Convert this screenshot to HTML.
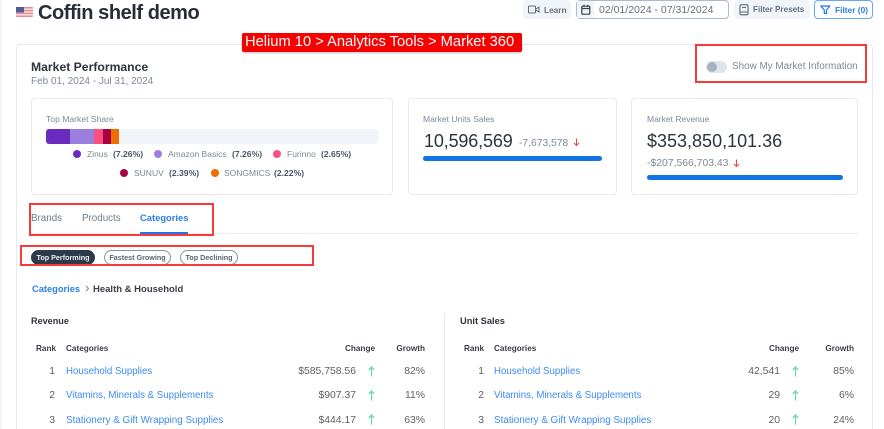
<!DOCTYPE html>
<html><head><meta charset="utf-8">
<style>
html,body{margin:0;padding:0;background:#fff;}
#p{position:relative;width:884px;height:429px;overflow:hidden;background:#fff;font-family:"Liberation Sans",sans-serif;color:#5f6b78;filter:blur(.35px);}
.t{position:absolute;white-space:nowrap;line-height:20px;height:20px;font-size:10.5px;}
.b{position:absolute;box-sizing:border-box;}
.card{position:absolute;box-sizing:border-box;border:1px solid #e6ebf1;border-radius:4px;background:#fff;}
.l{color:#3d8bf2;font-size:9.7px;}
.v{color:#5f5f5f;font-size:10.4px;}
.h{color:#3a3f46;font-size:8.2px;font-weight:bold;}
.g{color:#7d8996;}
.s{font-size:8.5px;}
.d{position:absolute;width:8px;height:8px;border-radius:50%;}
.pct{color:#4a5868;font-weight:bold;font-size:8.6px;}
.rb{position:absolute;box-sizing:border-box;border:2px solid #f73b3b;}
svg{position:absolute;overflow:visible;}
.pill{position:absolute;box-sizing:border-box;height:15px;top:250px;border-radius:8px;border:1px solid #8b949e;font-size:7.2px;font-weight:bold;line-height:13px;text-align:center;color:#5a6470;white-space:nowrap;}
</style></head><body><div id="p">
<div class="b" style="left:0;top:0;width:2px;height:429px;background:#f1f3f6"></div>

<svg style="left:16px;top:7px" width="17" height="10" viewBox="0 0 17 10"><rect width="17" height="10" rx="1" fill="#e58a92"/><rect y="1.5" width="17" height="1.4" fill="#f5e6e8"/><rect y="4.3" width="17" height="1.4" fill="#f5e6e8"/><rect y="7.1" width="17" height="1.4" fill="#f5e6e8"/><rect width="8" height="5.5" fill="#4d5f96"/></svg>
<div class="t" style="left:38px;top:3px;font-size:20px;font-weight:bold;color:#262d36;letter-spacing:-.45px">Coffin shelf demo</div>

<div class="b" style="left:523px;top:0;width:48px;height:19px;background:#f1f4f8;border-radius:4px"></div>
<svg style="left:528px;top:5px" width="12" height="10" fill="none" stroke="#5f6b78" stroke-width="1"><rect x=".5" y="1" width="7" height="7" rx="1"/><path d="M8 4l3-2v5l-3-2"/></svg>
<div class="t" style="left:544px;top:0;font-size:8.3px;font-weight:bold;color:#66727f">Learn</div>

<div class="b" style="left:576px;top:0;width:153px;height:19px;border:1px solid #a9bbd0;border-radius:4px"></div>
<div class="b" style="left:577px;top:1px;width:17px;height:17px;background:#f1f4f8"></div>
<svg style="left:581px;top:4px" width="10" height="12" fill="none" stroke="#39424e" stroke-width="1.2"><rect x=".8" y="2.2" width="8" height="8" rx="1"/><path d="M.8 4.5h8M3 .8v2M6.8 .8v2"/></svg>
<div class="t" style="left:599px;top:0;font-size:10.5px;color:#67727e">02/01/2024 - 07/31/2024</div>

<div class="b" style="left:734px;top:0;width:76px;height:19px;background:#f1f4f8;border-radius:4px"></div>
<svg style="left:739px;top:4px" width="10" height="12" fill="none" stroke="#5f6b78" stroke-width="1.1"><rect x="1" y=".8" width="8" height="10" rx="1"/><path d="M1 8h8M3 3.5h4"/></svg>
<div class="t" style="left:753px;top:0;font-size:8.1px;font-weight:bold;color:#66727f">Filter Presets</div>

<div class="b" style="left:814px;top:0;width:59px;height:19px;border:1px solid #6ba6f2;border-radius:4px"></div>
<svg style="left:820px;top:5px" width="11" height="10" fill="none" stroke="#1f76e8" stroke-width="1.2"><path d="M.8 1h9L6.5 5v3.5L4.3 8.5V5z" stroke-linejoin="round"/></svg>
<div class="t" style="left:835px;top:0;font-size:8.4px;font-weight:bold;color:#2b7fea">Filter (0)</div>

<div class="card" style="left:16px;top:44px;width:857px;height:400px"></div>

<div class="t" style="left:31px;top:57px;font-size:12.2px;font-weight:bold;color:#2b3440">Market Performance</div>
<div class="t g" style="left:31px;top:72px;font-size:10px">Feb 01, 2024 - Jul 31, 2024</div>

<div class="b" style="left:706px;top:61px;width:21px;height:12px;border-radius:6px;background:#dfe5ec"></div>
<div class="b" style="left:707px;top:62px;width:10px;height:10px;border-radius:50%;background:#a7b3c3"></div>
<div class="t g" style="left:732px;top:57px;font-size:9.900px">Show My Market Information</div>
<div class="rb" style="left:695px;top:44px;width:172px;height:39px"></div>

<div class="card" style="left:31px;top:98px;width:362px;height:97px"></div>
<div class="t g" style="left:46px;top:109px;font-size:8.6px">Top Market Share</div>
<div class="b" style="left:46px;top:129px;width:332px;height:15px;background:#f1f4f8;border-radius:3px"></div>
<div class="b" style="left:46px;top:129px;width:24px;height:15px;background:#6a2bbf;border-radius:3px 0 0 3px"></div>
<div class="b" style="left:70px;top:129px;width:24px;height:15px;background:#9b7fdc"></div>
<div class="b" style="left:94px;top:129px;width:9px;height:15px;background:#fb4f7f"></div>
<div class="b" style="left:103px;top:129px;width:8px;height:15px;background:#a80040"></div>
<div class="b" style="left:111px;top:129px;width:8px;height:15px;background:#ef6c00"></div>

<div class="d" style="left:73px;top:150px;background:#6a2bbf"></div>
<div class="t g s" style="left:87px;top:144px">Zinus</div>
<div class="t pct" style="left:113px;top:144px">(7.26%)</div>
<div class="d" style="left:154px;top:150px;background:#9b7fdc"></div>
<div class="t g s" style="left:168px;top:144px">Amazon Basics</div>
<div class="t pct" style="left:232px;top:144px">(7.26%)</div>
<div class="d" style="left:273px;top:150px;background:#fb4f7f"></div>
<div class="t g s" style="left:287px;top:144px">Furinno</div>
<div class="t pct" style="left:321px;top:144px">(2.65%)</div>
<div class="d" style="left:120px;top:169px;background:#a80040"></div>
<div class="t g s" style="left:134px;top:163px">SUNUV</div>
<div class="t pct" style="left:169px;top:163px">(2.39%)</div>
<div class="d" style="left:211px;top:169px;background:#ef6c00"></div>
<div class="t g s" style="left:224px;top:163px">SONGMICS</div>
<div class="t pct" style="left:274px;top:163px">(2.22%)</div>

<div class="card" style="left:408px;top:98px;width:209px;height:97px"></div>
<div class="t g s" style="left:423px;top:109px">Market Units Sales</div>
<div class="t" style="left:424px;top:131px;font-size:18px;color:#2c343d;letter-spacing:-.15px">10,596,569</div>
<div class="t g" style="left:519px;top:134px;font-size:10.3px">-7,673,578</div>
<svg style="left:573px;top:138px" width="7" height="9" fill="none" stroke="#e5484d" stroke-width="1"><path d="M3.500 .5v7M1 5l2.500 2.500L6 5"/></svg>
<div class="b" style="left:423px;top:156px;width:179px;height:5px;border-radius:3px;background:#1273e6"></div>

<div class="card" style="left:631px;top:98px;width:227px;height:97px"></div>
<div class="t g s" style="left:647px;top:109px">Market Revenue</div>
<div class="t" style="left:647px;top:131px;font-size:18px;color:#2c343d">$353,850,101.36</div>
<div class="t g" style="left:647px;top:154px;font-size:10.4px">-$207,566,703.43</div>
<svg style="left:733px;top:159px" width="7" height="9" fill="none" stroke="#e5484d" stroke-width="1"><path d="M3.500 .5v7M1 5l2.500 2.500L6 5"/></svg>
<div class="b" style="left:647px;top:175px;width:196px;height:5px;border-radius:3px;background:#1273e6"></div>

<div class="b" style="left:31px;top:233px;width:827px;height:1px;background:#e9edf2"></div>
<div class="t" style="left:31px;top:209px;font-size:9.8px;color:#6f7a86">Brands</div>
<div class="t" style="left:82px;top:209px;font-size:9.8px;color:#6f7a86">Products</div>
<div class="t" style="left:140px;top:208px;font-size:9.4px;font-weight:bold;color:#2b7fea">Categories</div>
<div class="b" style="left:140px;top:232px;width:48px;height:2px;background:#1f76e8"></div>
<div class="rb" style="left:29px;top:203px;width:185px;height:33px"></div>

<div class="pill" style="left:31px;width:64px;background:#2d3a4a;border-color:#2d3a4a;color:#eef1f4">Top Performing</div>
<div class="pill" style="left:104px;width:67px">Fastest Growing</div>
<div class="pill" style="left:180px;width:58px">Top Declining</div>
<div class="rb" style="left:20px;top:245px;width:294px;height:21px"></div>

<div class="t" style="left:32px;top:279px;font-size:9.3px;font-weight:bold;color:#2b7fea">Categories</div>
<svg style="left:85px;top:285px" width="5" height="7" fill="none" stroke="#7d8996" stroke-width="1"><path d="M1 .8l2.500 2.700L1 6.200"/></svg>
<div class="t" style="left:93px;top:280px;font-size:9.500px;font-weight:bold;color:#3a3f46">Health &amp; Household</div>

<div class="t" style="left:31px;top:311px;font-size:9.100px;font-weight:bold;color:#30363d">Revenue</div>
<div class="b" style="left:444px;top:313px;width:1px;height:116px;background:#e6ebf1"></div>
<div class="t" style="left:460px;top:311px;font-size:9.300px;font-weight:bold;color:#30363d">Unit Sales</div>

<div class="t h" style="left:36px;top:339px">Rank</div>
<div class="t h" style="left:66px;top:339px">Categories</div>
<div class="t h" style="right:509px;top:339px">Change</div>
<div class="t h" style="right:459px;top:339px">Growth</div>

<div class="t v" style="right:829px;top:362px">1</div>
<div class="t l" style="left:66px;top:362px">Household Supplies</div>
<div class="t v" style="right:528px;top:362px">$585,758.56</div>
<svg style="left:368px;top:366px" width="7" height="11" fill="none" stroke="#5fd8a8" stroke-width="1.200"><path d="M3.500 10.500V1M.8 3.800L3.500 1l2.700 2.800"/></svg>
<div class="t v" style="right:459px;top:362px">82%</div>

<div class="t v" style="right:829px;top:386px">2</div>
<div class="t l" style="left:66px;top:386px">Vitamins, Minerals &amp; Supplements</div>
<div class="t v" style="right:528px;top:386px">$907.37</div>
<svg style="left:368px;top:390px" width="7" height="11" fill="none" stroke="#5fd8a8" stroke-width="1.200"><path d="M3.500 10.500V1M.8 3.800L3.500 1l2.700 2.800"/></svg>
<div class="t v" style="right:459px;top:386px">11%</div>

<div class="t v" style="right:829px;top:411px">3</div>
<div class="t l" style="left:66px;top:411px;font-size:9.900px">Stationery &amp; Gift Wrapping Supplies</div>
<div class="t v" style="right:528px;top:411px">$444.17</div>
<svg style="left:368px;top:414px" width="7" height="11" fill="none" stroke="#5fd8a8" stroke-width="1.200"><path d="M3.500 10.500V1M.8 3.800L3.500 1l2.700 2.800"/></svg>
<div class="t v" style="right:459px;top:411px">63%</div>

<div class="t h" style="left:464px;top:339px">Rank</div>
<div class="t h" style="left:494px;top:339px">Categories</div>
<div class="t h" style="right:85px;top:339px">Change</div>
<div class="t h" style="right:30px;top:339px">Growth</div>

<div class="t v" style="right:400px;top:362px">1</div>
<div class="t l" style="left:494px;top:362px">Household Supplies</div>
<div class="t v" style="right:104px;top:362px">42,541</div>
<svg style="left:792px;top:366px" width="7" height="11" fill="none" stroke="#5fd8a8" stroke-width="1.200"><path d="M3.500 10.500V1M.8 3.800L3.500 1l2.700 2.800"/></svg>
<div class="t v" style="right:30px;top:362px">85%</div>

<div class="t v" style="right:400px;top:386px">2</div>
<div class="t l" style="left:494px;top:386px">Vitamins, Minerals &amp; Supplements</div>
<div class="t v" style="right:104px;top:386px">29</div>
<svg style="left:792px;top:390px" width="7" height="11" fill="none" stroke="#5fd8a8" stroke-width="1.200"><path d="M3.500 10.500V1M.8 3.800L3.500 1l2.700 2.800"/></svg>
<div class="t v" style="right:30px;top:386px">6%</div>

<div class="t v" style="right:400px;top:411px">3</div>
<div class="t l" style="left:494px;top:411px;font-size:9.900px">Stationery &amp; Gift Wrapping Supplies</div>
<div class="t v" style="right:104px;top:411px">20</div>
<svg style="left:792px;top:414px" width="7" height="11" fill="none" stroke="#5fd8a8" stroke-width="1.200"><path d="M3.500 10.500V1M.8 3.800L3.500 1l2.700 2.800"/></svg>
<div class="t v" style="right:30px;top:411px">24%</div>

<div class="b" style="left:242px;top:33px;width:280px;height:19px;background:#f60000;border-radius:2px;box-shadow:0 1px 2px rgba(0,0,0,.25)"></div>
<div class="t" style="left:245px;top:32px;font-size:14.700px;color:#fff">Helium 10 &gt; Analytics Tools &gt; Market 360</div>
</div></body></html>
